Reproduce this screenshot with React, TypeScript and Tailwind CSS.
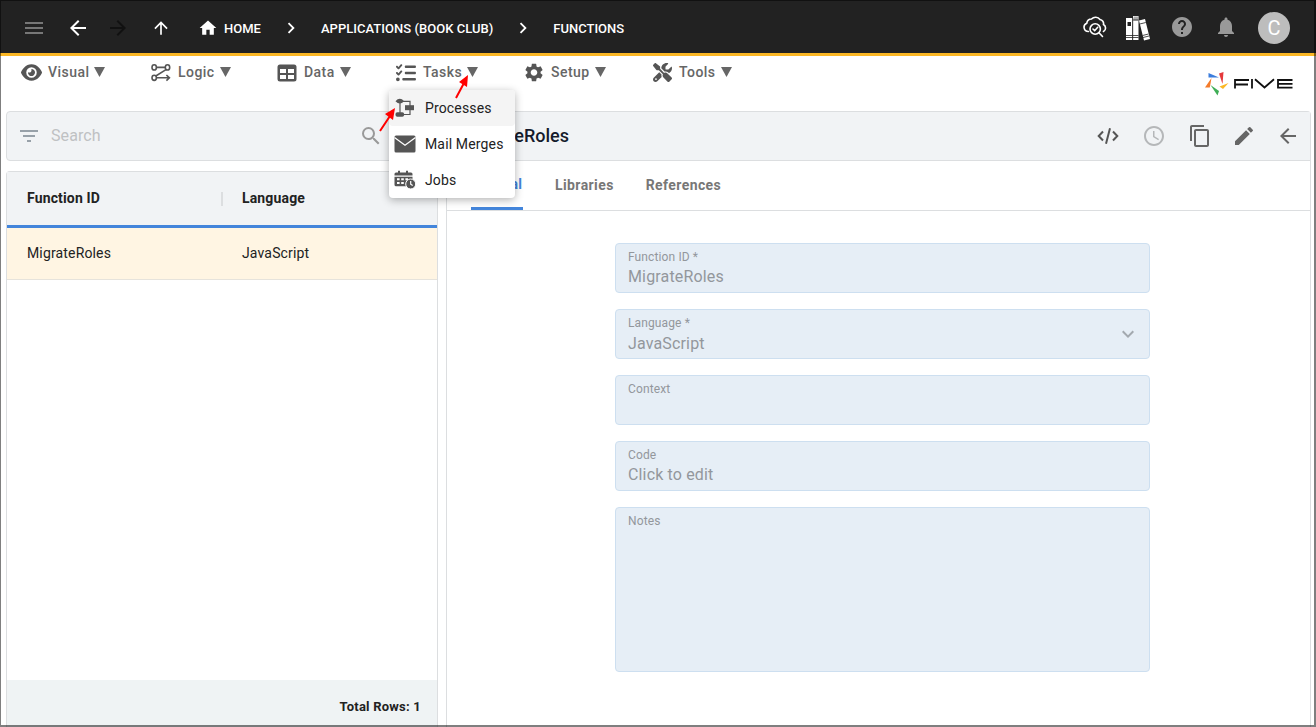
import React from "react";
import {
  MdArrowBack,
  MdArrowForward,
  MdArrowUpward,
  MdChevronRight,
  MdContentCopy,
  MdEdit,
  MdExpandMore,
  MdFilterList,
  MdHelp,
  MdHome,
  MdMenu,
  MdNotifications,
  MdSchedule,
  MdSearch,
  MdSettings,
} from "react-icons/md";
import { FaEye, FaListCheck, FaScrewdriverWrench } from "react-icons/fa6";

const LogicIcon = () => (
  <svg width="20" height="18" viewBox="0 0 20 18" fill="none" stroke="#555" strokeWidth="1.6">
    <ellipse cx="3.2" cy="3.4" rx="2.2" ry="2.6" />
    <ellipse cx="16.5" cy="3.4" rx="2.2" ry="2.6" />
    <ellipse cx="3.2" cy="13.8" rx="2.2" ry="2.6" />
    <path d="M5.4 3.4h8.9M15 5.6L4.8 12M5.4 13.8h12.4M15.4 11l3 2.8-3 2.8" />
  </svg>
);

const DataIcon = () => (
  <svg width="20" height="18" viewBox="0 0 20 18">
    <rect x="0.5" y="0.5" width="19" height="17" rx="2.5" fill="#555" />
    <path d="M3 5h6v4H3zM11 5h6v4h-6zM3 11h6v4H3zM11 11h6v4h-6z" fill="#fff" />
  </svg>
);

const CodeIcon = () => (
  <svg width="22" height="18" viewBox="0 0 22 18" fill="none" stroke="#555" strokeWidth="2">
    <path d="M6 4.500L1.700 9 6 13.500M16 4.500L20.300 9 16 13.500M13 1.200L9 16.800" />
  </svg>
);

const ProcessIcon = () => (
  <svg width="20" height="20" viewBox="0 0 20 20">
    <path d="M5 4v12M5 3.300h10V8M15 11v5.500H8" fill="none" stroke="#555" strokeWidth="1.2" />
    <path d="M.5 3.200Q4.800-1.600 9.100 3.200 4.800 8 .5 3.200z" fill="#555" />
    <rect x="10" y="7.200" width="9" height="5" fill="#555" />
    <rect x=".5" y="14.300" width="8.600" height="4.400" rx="1.800" fill="#555" />
  </svg>
);

const MailIcon = () => (
  <svg width="22" height="18" viewBox="0 0 22 18">
    <rect x="0.5" y="0.5" width="21" height="17" rx="1.5" fill="#555" />
    <path d="M.5 2.500L11 10.200l10.500-7.700" fill="none" stroke="#fff" strokeWidth="1.3" />
  </svg>
);

const JobsIcon = () => (
  <svg width="22" height="20" viewBox="0 0 22 20">
    <path d="M2 2.500h2V.8h2v1.700h6V.8h2v1.700h3a1.500 1.500 0 011.500 1.500v1.500H.5V4A1.500 1.500 0 012 2.500zM.5 6.800h18v4H12v5.400H2A1.500 1.500 0 01.5 14.700z" fill="#555" />
    <path d="M3 8.300h2.600v2H3zM7.200 8.300h2.600v2H7.200zM11.400 8.300H14v2h-2.600zM3 12h2.600v2H3zM7.200 12h2.600v2H7.200z" fill="#fff" />
    <circle cx="16.700" cy="14" r="5" fill="#555" stroke="#fff" />
    <path d="M16.700 11v3.200l2 1.300" fill="none" stroke="#fff" strokeWidth="1.2" />
  </svg>
);

const CloudSearchIcon = () => (
  <svg width="24" height="24" viewBox="0 0 24 24" fill="none" stroke="#fff" strokeWidth="1.6" strokeLinecap="round">
    <path d="M5.500 15.500A4.300 4.300 0 013.800 7.200 4.800 4.800 0 018.500 3 5.500 5.500 0 0117 3.500a4.200 4.200 0 013.500 5A4 4 0 0120.500 15.500" />
    <circle cx="12.200" cy="13" r="5.200" />
    <path d="M10 13l1.700 1.700 3-3.400M16.200 17l3.300 3.500" />
  </svg>
);

const BooksIcon = () => (
  <svg width="26" height="26" viewBox="0 0 26 26">
    <path d="M1 3h6.500v22H1z" fill="#fff" />
    <path d="M8 1h5.500v24H8z" fill="#fff" />
    <path d="M8.500 1.500h4.500v4H8.500z" fill="#aaa" />
    <path d="M14 5.500l6-1.500 5 20-6 1.500z" fill="#fff" />
    <path d="M2.500 7h3.500v4H2.500z" fill="#222" />
    <path d="M1 20.500h12.500M1 22.500h12.500M8 5h5.500M7.700 3v22M14.800 9l6-1.500M17.500 20.500l6-1.500M18 22.500l6-1.500" stroke="#222" strokeWidth=".8" />
  </svg>
);

const FiveLogo = () => (
  <svg width="90" height="26" viewBox="0 0 90 26">
    <path d="M3.500 3l10.500 4.500L3.500 7.500z" fill="#3b7ddd" />
    <path d="M14 3.500l4.500-1.500-1 12z" fill="#e5393c" />
    <path d="M14.500 16.500l9-3.500-5.500 6z" fill="#fbb724" />
    <path d="M5.500 15l8.500 6-1.500 4.500z" fill="#3fae56" />
    <path d="M6.500 8L0 17.500h4.800z" fill="#f47b2a" />
    <g fill="none" stroke="#111" strokeWidth="1.8">
      <path d="M30 18.500V10h14M30 14.500h13M47 9v9.500M50 9.200l9.500 8.300L69 9.200M87.500 10H73v7.600h14.500M73 13.800h14.500" />
    </g>
  </svg>
);

const menus = [
  { label: "Visual", icon: <FaEye size={21} />, className: "w-[130px]" },
  { label: "Logic", icon: <LogicIcon />, className: "w-[126px]" },
  { label: "Data", icon: <DataIcon />, className: "w-[119px]" },
  { label: "Tasks", icon: <FaListCheck size={20} />, className: "w-[128px]" },
  { label: "Setup", icon: <MdSettings size={23} />, className: "w-[128px]" },
  { label: "Tools", icon: <FaScrewdriverWrench size={19} />, className: "w-[128px]" },
];

const taskItems = [
  { label: "Processes", icon: <ProcessIcon />, active: true },
  { label: "Mail Merges", icon: <MailIcon /> },
  { label: "Jobs", icon: <JobsIcon /> },
];

type FieldProps = {
  label: string;
  value?: string;
  tall?: boolean;
  select?: boolean;
};

const Field = ({ label, value, tall, select }: FieldProps) => (
  <div
    className={`flex items-center justify-between rounded border border-[#cddff0] bg-[#e6eef6] px-3 ${
      tall ? "h-[165px]" : "h-[50px]"
    }`}
  >
    <div className="flex flex-col self-stretch pt-[5px] text-[#93979c]">
      <span className="text-xs leading-4 tracking-[0.12px]">{label}</span>
      <span className={`leading-6 tracking-[0.15px] ${select ? "pt-px" : ""}`}>{value}</span>
    </div>
    {select && <MdExpandMore size={24} className="mr-[-3px] text-[#a3a9af]" />}
  </div>
);

const TopBar = () => (
  <header className="flex h-14 shrink-0 items-center border-b-[3px] border-[#fbb724] bg-[#222] pt-[3px] text-[13px] font-medium text-white">
    <MdMenu size={24} className="ml-[22px] text-[#777]" />
    <MdArrowBack size={24} className="ml-5" />
    <MdArrowForward size={24} className="ml-4 text-[#111]" />
    <MdArrowUpward size={20} className="ml-[21px]" />
    <MdHome size={20} className="ml-[27px]" />
    <span className="ml-[6px] pt-[2px]">HOME</span>
    <MdChevronRight size={22} className="ml-[19px]" />
    <span className="ml-[19px] pt-[2px] tracking-[0.03px]">APPLICATIONS (BOOK CLUB)</span>
    <MdChevronRight size={22} className="ml-[19px]" />
    <span className="ml-[19px] pt-[2px]">FUNCTIONS</span>
    <div className="ml-auto mr-[26px] flex items-center">
      <CloudSearchIcon />
      <div className="ml-[18px]"><BooksIcon /></div>
      <MdHelp size={24} className="mb-[3px] ml-[19px] text-[#999]" />
      <MdNotifications size={24} className="mb-[3px] ml-5 text-[#999]" />
      <span className="ml-5 flex size-8 items-center justify-center rounded-full bg-[#bdbdbd] text-xl font-normal">C</span>
    </div>
  </header>
);

const MenuBar = () => (
  <nav className="flex h-[55px] shrink-0 pl-5">
    {menus.map((menu) => (
      <div key={menu.label} className={`flex h-[33px] items-center text-[#555] ${menu.className}`}>
        <span className="flex w-[22px] justify-center">{menu.icon}</span>
        <span className="mb-[2px] ml-[6px] text-sm font-medium tracking-[0.45px] text-[#666]">{menu.label}</span>
        <svg width="11" height="10" className="mb-px ml-[5px]">
          <path d="M0 0h11L5.500 10z" fill="#666" />
        </svg>
      </div>
    ))}
    <div className="ml-auto mr-[21px] mt-[14px]"><FiveLogo /></div>
  </nav>
);

const TaskMenu = () => (
  <div className="absolute left-[389px] top-[90px] w-[126px] rounded bg-white text-sm tracking-[0.15px] text-[#222] shadow-[0_2px_8px_rgba(0,0,0,0.3)]">
    {taskItems.map((item) => (
      <div key={item.label} className={`flex h-9 items-center rounded pl-[5px] ${item.active ? "bg-[#f4f4f4]" : ""}`}>
        <span className="flex w-[22px] justify-center">{item.icon}</span>
        <span className="ml-[9px] whitespace-nowrap">{item.label}</span>
      </div>
    ))}
  </div>
);

const FunctionList = () => (
  <section className="flex w-[432px] flex-col">
    <div className="flex h-[50px] shrink-0 items-center rounded border border-[#dcdee0] bg-[#f1f3f5]">
      <MdFilterList size={24} className="ml-[10px] text-[#98a1a9]" />
      <span className="ml-[10px] text-base tracking-[0.1px] text-[#bfc1c3]">Search</span>
      <MdSearch size={24} className="ml-auto mr-[54px] text-[#999]" />
    </div>
    <div className="mt-[10px] flex flex-1 flex-col rounded-t border border-b-0 border-[#dcdee0] text-sm tracking-[0.15px]">
      <div className="flex h-[56px] shrink-0 items-center border-b-[3px] border-[#4385db] bg-[#f1f3f5] font-bold text-[#222]">
        <span className="mb-[2px] ml-5 w-[194px]">Function ID</span>
        <span className="h-[14px] w-[2px] bg-[#dcdee0]" />
        <span className="mb-[2px] ml-[19px]">Language</span>
      </div>
      <div className="flex h-[52px] shrink-0 items-center border-b border-[#e6e3dc] bg-[#fff5e3] pb-[2px] text-[#222]">
        <span className="ml-5 w-[215px]">MigrateRoles</span>
        <span>JavaScript</span>
      </div>
      <div className="mt-auto flex h-[47px] items-center justify-end bg-[#eff3f4] pr-4 pt-2 text-[13px] font-bold tracking-[0.22px] text-[#222]">
        Total Rows: 1
      </div>
    </div>
  </section>
);

const FunctionForm = () => (
  <section className="ml-2 flex w-[865px] flex-col rounded-t border border-b-0 border-[#dcdee0]">
    <div className="flex h-[49px] shrink-0 items-center border-b border-[#dcdee0] bg-[#f1f3f5] text-[#666]">
      <h1 className="ml-[15px] text-lg font-medium text-[#151b2c]">MigrateRoles</h1>
      <span className="ml-auto"><CodeIcon /></span>
      <MdSchedule size={24} className="ml-[23px] text-[#b5b7b9]" />
      <MdContentCopy size={24} className="ml-[22px]" />
      <MdEdit size={24} className="ml-5" />
      <MdArrowBack size={24} className="ml-5 mr-[10px]" />
    </div>
    <div className="flex h-[50px] shrink-0 border-b border-[#dcdee0] text-sm font-bold tracking-[0.4px] text-[#777]">
      <span className="ml-6 flex w-[52px] items-center border-b-[3px] border-[#4385db] text-[#4385db]">General</span>
      <span className="ml-8 flex items-center pb-px">Libraries</span>
      <span className="ml-8 flex items-center pb-px">References</span>
    </div>
    <div className="ml-[168px] mt-8 flex w-[535px] flex-col gap-4">
      <Field label="Function ID *" value="MigrateRoles" />
      <Field label="Language *" value="JavaScript" select />
      <Field label="Context" />
      <Field label="Code" value="Click to edit" />
      <Field label="Notes" tall />
    </div>
  </section>
);

export default function App() {
  return (
    <div className="relative flex h-[727px] w-[1316px] flex-col overflow-hidden bg-white font-[Roboto,sans-serif]">
      <TopBar />
      <MenuBar />
      <main className="flex flex-1 pl-[6px]">
        <FunctionList />
        <FunctionForm />
      </main>
      <TaskMenu />
      <svg width="110" height="70" className="absolute left-[375px] top-[70px]">
        <path d="M81 28l8-15M5 61l10-15" stroke="#f00" strokeWidth="2" />
        <path d="M93 5l-1 12-8-5zM20 38l-2 12-8-6z" fill="#f00" />
      </svg>
      <div className="pointer-events-none absolute inset-0 border-b-2 border-l border-r-2 border-t border-black/50" />
    </div>
  );
}
